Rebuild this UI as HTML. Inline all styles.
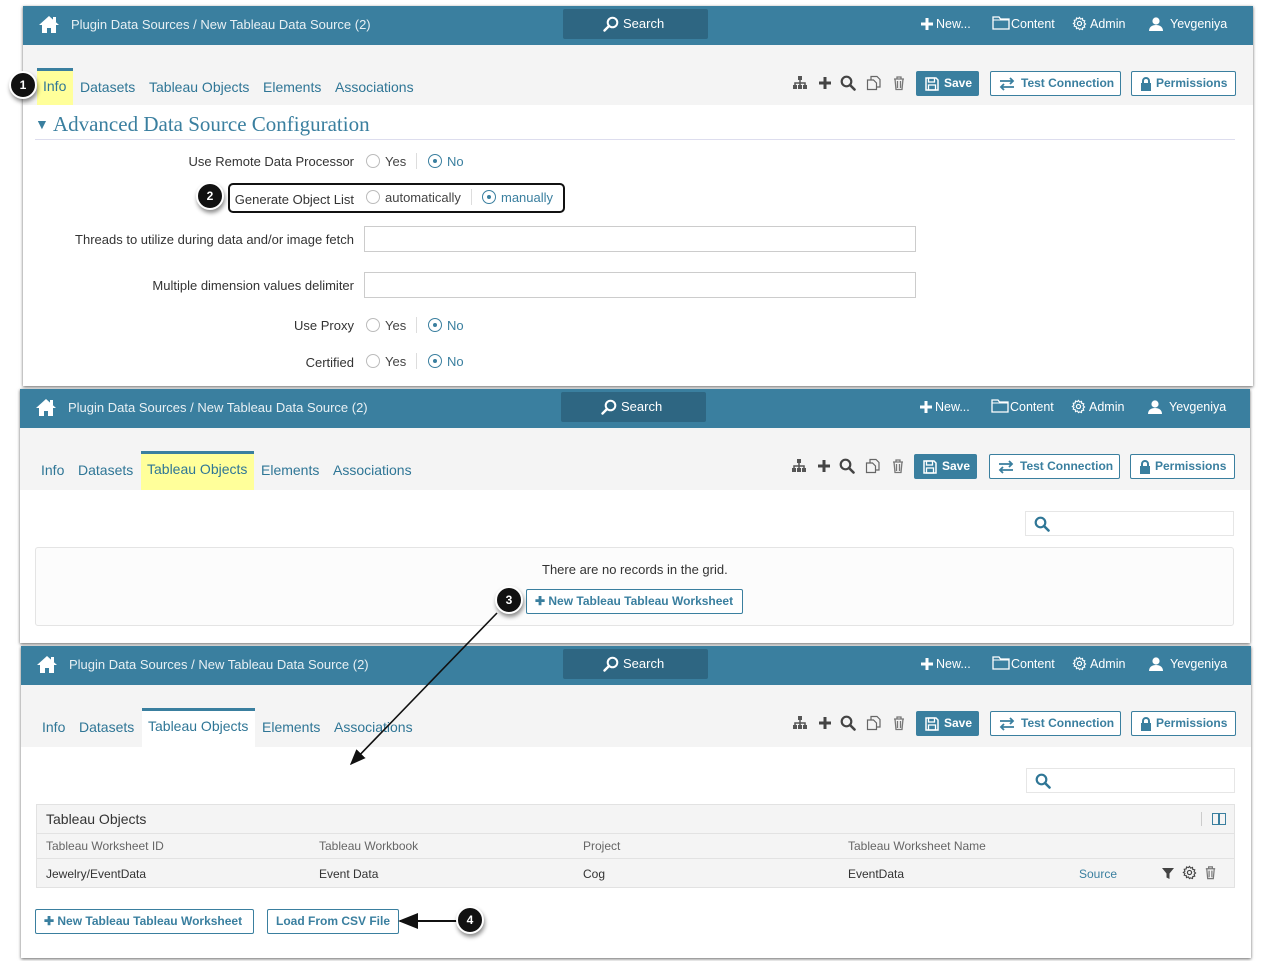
<!DOCTYPE html>
<html><head><meta charset="utf-8"><style>
*{box-sizing:border-box;margin:0;padding:0}
body{width:1264px;height:961px;background:#fff;font-family:"Liberation Sans",sans-serif;position:relative;overflow:hidden;font-size:13px;color:#333}
.a{position:absolute}
.panel{position:absolute;background:#fff;width:1230px;box-shadow:0 1px 3px rgba(0,0,0,.6)}
.hdr{position:absolute;left:0;top:0;width:100%;height:39px;background:#3a7f9f;color:#fff}
.hdr .t{position:absolute;left:48px;top:11px;font-size:13px;color:#e8f0f4}
.srch{position:absolute;left:540px;top:3px;width:145px;height:30px;background:#2e6682;border-radius:2px;font-size:13px;color:#fff;line-height:30px;padding-left:60px}
.srch svg{position:absolute;left:40px;top:7px}
.hi{position:absolute;top:11px;font-size:12.5px;color:#fff}
.hi svg{position:absolute;left:-19px;top:-1px}
.bar{position:absolute;left:0;top:39px;width:100%;height:60px;background:#f4f4f4}
.tab{position:absolute;top:34px;font-size:14px;color:#2f7696}
.tb{position:absolute;top:26px;height:25px;border:1px solid #3a7f9f;border-radius:2px;font-size:12px;font-weight:bold;color:#3a7f9f;background:#fff;line-height:23px;padding-left:30px}
.tb svg{position:absolute;left:8px;top:5px}
.save{background:#3a7f9f;color:#fff}
.lbl{position:absolute;font-size:13px;color:#333;text-align:right;white-space:nowrap}
.rad{position:absolute;width:14px;height:14px;border:1px solid #bbb;border-radius:50%}
.rad.on{border-color:#3a7f9f}
.rad.on:after{content:"";position:absolute;left:4px;top:4px;width:4px;height:4px;border-radius:50%;background:#3a7f9f}
.rt{position:absolute;font-size:13px;color:#444}
.sep{position:absolute;width:1px;height:16px;background:#ddd}
.inp{position:absolute;border:1px solid #ccc;background:#fff}
.call{position:absolute;width:28px;height:28px;border-radius:50%;background:#111;color:#fff;font-size:12px;font-weight:bold;text-align:center;line-height:24px;box-shadow:1px 3px 4px rgba(0,0,0,.45);border:2px solid #fff}
.obtn{position:absolute;height:25px;border:1px solid #3a7f9f;border-radius:2px;background:#fff;color:#3a7f9f;font-size:12px;font-weight:bold;line-height:23px;padding:0 8px;white-space:nowrap}
.ic{position:absolute;top:30px}
</style></head><body>

<svg width="0" height="0" style="position:absolute">
 <defs>
  <symbol id="home" viewBox="0 0 22 20"><path d="M11 2L1 11h3v8h5v-5h4v5h5v-8h3z" fill="#fff"/><rect x="15" y="3" width="3" height="5" fill="#fff"/></symbol>
  <symbol id="mag" viewBox="0 0 16 16"><circle cx="9.5" cy="6.5" r="4.8" fill="none" stroke="currentColor" stroke-width="2"/><path d="M6 10L1.5 14.5" stroke="currentColor" stroke-width="2.4" stroke-linecap="round"/></symbol>
  <symbol id="magr" viewBox="0 0 16 16"><circle cx="6.5" cy="6.5" r="4.8" fill="none" stroke="currentColor" stroke-width="2.2"/><path d="M10 10L14.5 14.5" stroke="currentColor" stroke-width="2.6" stroke-linecap="round"/></symbol>
  <symbol id="tree" viewBox="0 0 16 16"><rect x="6" y="1" width="4" height="4" fill="#555"/><path d="M8 5v3M3 10V8h10v2M8 8v2" stroke="#555" stroke-width="1.5" fill="none"/><rect x="1" y="10" width="4" height="4" fill="#555"/><rect x="6" y="10" width="4" height="4" fill="#555"/><rect x="11" y="10" width="4" height="4" fill="#555"/></symbol>
  <symbol id="plus" viewBox="0 0 16 16"><path d="M8 2v12M2 8h12" stroke="#444" stroke-width="3"/></symbol>
  <symbol id="copy" viewBox="0 0 16 16"><path d="M5 5V1.5h6l3 3V12h-3M1.5 5h6l3 3v6.5h-9z" fill="none" stroke="#666" stroke-width="1.2"/></symbol>
  <symbol id="trash" viewBox="0 0 16 16"><path d="M3 4h10M6 4V2h4v2M4 4l1 10.5h6L12 4M6.5 6v7M9.5 6v7" fill="none" stroke="#777" stroke-width="1.3"/></symbol>
  <symbol id="disk" viewBox="0 0 14 14"><path d="M1 1h10l2 2v10H1z" fill="none" stroke="#fff" stroke-width="1.5"/><rect x="3.5" y="1" width="6" height="4" fill="none" stroke="#fff" stroke-width="1.3"/><rect x="3.5" y="8" width="7" height="5" fill="none" stroke="#fff" stroke-width="1.3"/></symbol>
  <symbol id="swap" viewBox="0 0 16 14"><path d="M1 4h13M11 1l3 3-3 3M15 10H2M5 7l-3 3 3 3" fill="none" stroke="#3a7f9f" stroke-width="1.8"/></symbol>
  <symbol id="lock" viewBox="0 0 12 14"><path d="M3 6V4a3 3 0 016 0v2" fill="none" stroke="#3a7f9f" stroke-width="2"/><rect x="1" y="6" width="10" height="8" fill="#3a7f9f"/></symbol>
  <symbol id="fold" viewBox="0 0 18 14"><path d="M1 1h6l1.5 2H17v10H1z" fill="none" stroke="#fff" stroke-width="1.3"/><path d="M1 4h16" stroke="#fff" stroke-width="1"/></symbol>
  <symbol id="gear" viewBox="0 0 16 16"><circle cx="8" cy="8" r="2.2" fill="none" stroke="currentColor" stroke-width="1.3"/><path d="M8 1.5l1.2 1.8 2-.7.3 2.1 2.1.4-.7 2 1.6 1.4-1.6 1.4.7 2-2.1.4-.3 2.1-2-.7L8 14.5l-1.2-1.8-2 .7-.3-2.1-2.1-.4.7-2L1.5 8l1.6-1.4-.7-2 2.1-.4.3-2.1 2 .7z" fill="none" stroke="currentColor" stroke-width="1.2"/></symbol>
  <symbol id="user" viewBox="0 0 16 16"><circle cx="8" cy="5" r="3.6" fill="#fff"/><path d="M1 15c0-4 3-6 7-6s7 2 7 6z" fill="#fff"/></symbol>
 </defs>
</svg>

<!-- PANEL 1 -->
<div class="panel" style="left:23px;top:6px;height:380px">
 <div class="hdr">
  <svg class="a" style="left:15px;top:8px" width="22" height="20"><use href="#home"/></svg>
  <div class="t">Plugin Data Sources / New Tableau Data Source (2)</div>
  <div class="srch"><svg width="16" height="16" style="color:#fff"><use href="#mag"/></svg>Search</div>
  <div class="hi" style="left:913px"><svg width="12" height="12" style="left:-15px;top:1px"><path d="M6 0v12M0 6h12" stroke="#fff" stroke-width="3"/></svg>New...</div>
  <div class="hi" style="left:988px"><svg width="18" height="14"><use href="#fold"/></svg>Content</div>
  <div class="hi" style="left:1067px"><svg width="15" height="15" style="color:#fff;left:-18px"><use href="#gear"/></svg>Admin</div>
  <div class="hi" style="left:1147px"><svg width="16" height="16" style="left:-22px"><use href="#user"/></svg>Yevgeniya</div>
 </div>
 <div class="bar">
  <div class="a" style="left:14px;top:23px;width:36px;height:37px;background:#ffff9a;border-top:3px solid #3a7f9f"></div>
  <div class="tab" style="left:20px;top:33px">Info</div>
  <div class="tab" style="left:57px">Datasets</div>
  <div class="tab" style="left:126px">Tableau Objects</div>
  <div class="tab" style="left:240px">Elements</div>
  <div class="tab" style="left:312px">Associations</div>
  <svg class="ic" style="left:769px" width="16" height="16"><use href="#tree"/></svg>
  <svg class="ic" style="left:794px" width="16" height="16"><use href="#plus"/></svg>
  <svg class="ic" style="left:817px;color:#444" width="16" height="16"><use href="#magr"/></svg>
  <svg class="ic" style="left:843px" width="16" height="16"><use href="#copy"/></svg>
  <svg class="ic" style="left:868px" width="16" height="16"><use href="#trash"/></svg>
  <div class="tb save" style="left:893px;width:63px;padding-left:27px"><svg width="14" height="14"><use href="#disk"/></svg>Save</div>
  <div class="tb" style="left:967px;width:131px"><svg width="16" height="14"><use href="#swap"/></svg>Test Connection</div>
  <div class="tb" style="left:1108px;width:105px;padding-left:24px"><svg width="12" height="14"><use href="#lock"/></svg>Permissions</div>
 </div>
 <div class="a" style="left:12px;top:106px;font-family:'Liberation Serif',serif;font-size:21px;color:#3a7f9f"><span style="font-size:14px;position:relative;top:-2px">▼</span> Advanced Data Source Configuration</div>
 <div class="a" style="left:12px;top:133px;width:1200px;height:1px;background:#dde"></div>
 <div class="lbl" style="top:148px;right:899px">Use Remote Data Processor</div>
 <div class="rad" style="left:343px;top:148px"></div><div class="rt" style="left:362px;top:148px">Yes</div><div class="sep" style="left:393px;top:147px"></div>
 <div class="rad on" style="left:405px;top:148px"></div><div class="rt" style="left:424px;top:148px;color:#3a7f9f">No</div>
 <div class="a" style="left:205px;top:177px;width:337px;height:30px;border:2px solid #111;border-radius:5px"></div>
 <div class="lbl" style="top:186px;right:899px">Generate Object List</div>
 <div class="rad" style="left:343px;top:184px"></div><div class="rt" style="left:362px;top:184px">automatically</div><div class="sep" style="left:448px;top:183px"></div>
 <div class="rad on" style="left:459px;top:184px"></div><div class="rt" style="left:478px;top:184px;color:#3a7f9f">manually</div>
 <div class="lbl" style="top:226px;right:899px">Threads to utilize during data and/or image fetch</div>
 <div class="inp" style="left:341px;top:220px;width:552px;height:26px"></div>
 <div class="lbl" style="top:272px;right:899px">Multiple dimension values delimiter</div>
 <div class="inp" style="left:341px;top:266px;width:552px;height:26px"></div>
 <div class="lbl" style="top:312px;right:899px">Use Proxy</div>
 <div class="rad" style="left:343px;top:312px"></div><div class="rt" style="left:362px;top:312px">Yes</div><div class="sep" style="left:393px;top:311px"></div>
 <div class="rad on" style="left:405px;top:312px"></div><div class="rt" style="left:424px;top:312px;color:#3a7f9f">No</div>
 <div class="lbl" style="top:349px;right:899px">Certified</div>
 <div class="rad" style="left:343px;top:348px"></div><div class="rt" style="left:362px;top:348px">Yes</div><div class="sep" style="left:393px;top:347px"></div>
 <div class="rad on" style="left:405px;top:348px"></div><div class="rt" style="left:424px;top:348px;color:#3a7f9f">No</div>
</div>

<!-- PANEL 2 -->
<div class="panel" style="left:20px;top:389px;height:254px">
 <div class="hdr">
  <svg class="a" style="left:15px;top:8px" width="22" height="20"><use href="#home"/></svg>
  <div class="t">Plugin Data Sources / New Tableau Data Source (2)</div>
  <div class="srch" style="left:541px"><svg width="16" height="16" style="color:#fff"><use href="#mag"/></svg>Search</div>
  <div class="hi" style="left:915px"><svg width="12" height="12" style="left:-15px;top:1px"><path d="M6 0v12M0 6h12" stroke="#fff" stroke-width="3"/></svg>New...</div>
  <div class="hi" style="left:990px"><svg width="18" height="14"><use href="#fold"/></svg>Content</div>
  <div class="hi" style="left:1069px"><svg width="15" height="15" style="color:#fff;left:-18px"><use href="#gear"/></svg>Admin</div>
  <div class="hi" style="left:1149px"><svg width="16" height="16" style="left:-22px"><use href="#user"/></svg>Yevgeniya</div>
 </div>
 <div class="bar" style="height:62px">
  <div class="a" style="left:121px;top:23px;width:113px;height:39px;background:#ffff9a;border-top:3px solid #3a7f9f"></div>
  <div class="tab" style="left:21px">Info</div>
  <div class="tab" style="left:58px">Datasets</div>
  <div class="tab" style="left:127px;top:33px">Tableau Objects</div>
  <div class="tab" style="left:241px">Elements</div>
  <div class="tab" style="left:313px">Associations</div>
  <svg class="ic" style="left:771px" width="16" height="16"><use href="#tree"/></svg>
  <svg class="ic" style="left:796px" width="16" height="16"><use href="#plus"/></svg>
  <svg class="ic" style="left:819px;color:#444" width="16" height="16"><use href="#magr"/></svg>
  <svg class="ic" style="left:845px" width="16" height="16"><use href="#copy"/></svg>
  <svg class="ic" style="left:870px" width="16" height="16"><use href="#trash"/></svg>
  <div class="tb save" style="left:894px;width:63px;padding-left:27px"><svg width="14" height="14"><use href="#disk"/></svg>Save</div>
  <div class="tb" style="left:969px;width:131px"><svg width="16" height="14"><use href="#swap"/></svg>Test Connection</div>
  <div class="tb" style="left:1110px;width:105px;padding-left:24px"><svg width="12" height="14"><use href="#lock"/></svg>Permissions</div>
 </div>
 <div class="inp" style="left:1005px;top:122px;width:209px;height:25px;border-color:#e6e6e6"><svg class="a" style="left:8px;top:4px;color:#2f7696" width="16" height="16"><use href="#magr"/></svg></div>
 <div class="a" style="left:15px;top:158px;width:1199px;height:79px;border:1px solid #e4e4e4;border-radius:3px;background:#fcfcfc"></div>
 <div class="a" style="left:522px;top:173px;font-size:13px;color:#333">There are no records in the grid.</div>
 <div class="obtn" style="left:506px;top:200px;width:217px">✚ New Tableau Tableau Worksheet</div>
</div>

<!-- PANEL 3 -->
<div class="panel" style="left:21px;top:646px;height:312px">
 <div class="hdr">
  <svg class="a" style="left:15px;top:8px" width="22" height="20"><use href="#home"/></svg>
  <div class="t">Plugin Data Sources / New Tableau Data Source (2)</div>
  <div class="srch" style="left:542px"><svg width="16" height="16" style="color:#fff"><use href="#mag"/></svg>Search</div>
  <div class="hi" style="left:915px"><svg width="12" height="12" style="left:-15px;top:1px"><path d="M6 0v12M0 6h12" stroke="#fff" stroke-width="3"/></svg>New...</div>
  <div class="hi" style="left:990px"><svg width="18" height="14"><use href="#fold"/></svg>Content</div>
  <div class="hi" style="left:1069px"><svg width="15" height="15" style="color:#fff;left:-18px"><use href="#gear"/></svg>Admin</div>
  <div class="hi" style="left:1149px"><svg width="16" height="16" style="left:-22px"><use href="#user"/></svg>Yevgeniya</div>
 </div>
 <div class="bar" style="height:62px">
  <div class="a" style="left:121px;top:23px;width:113px;height:39px;background:#fff;border-top:3px solid #3a7f9f"></div>
  <div class="tab" style="left:21px">Info</div>
  <div class="tab" style="left:58px">Datasets</div>
  <div class="tab" style="left:127px;top:33px">Tableau Objects</div>
  <div class="tab" style="left:241px">Elements</div>
  <div class="tab" style="left:313px">Associations</div>
  <svg class="ic" style="left:771px" width="16" height="16"><use href="#tree"/></svg>
  <svg class="ic" style="left:796px" width="16" height="16"><use href="#plus"/></svg>
  <svg class="ic" style="left:819px;color:#444" width="16" height="16"><use href="#magr"/></svg>
  <svg class="ic" style="left:845px" width="16" height="16"><use href="#copy"/></svg>
  <svg class="ic" style="left:870px" width="16" height="16"><use href="#trash"/></svg>
  <div class="tb save" style="left:895px;width:63px;padding-left:27px"><svg width="14" height="14"><use href="#disk"/></svg>Save</div>
  <div class="tb" style="left:969px;width:131px"><svg width="16" height="14"><use href="#swap"/></svg>Test Connection</div>
  <div class="tb" style="left:1110px;width:105px;padding-left:24px"><svg width="12" height="14"><use href="#lock"/></svg>Permissions</div>
 </div>
 <div class="inp" style="left:1005px;top:122px;width:209px;height:25px;border-color:#e6e6e6"><svg class="a" style="left:8px;top:4px;color:#2f7696" width="16" height="16"><use href="#magr"/></svg></div>
 <div class="a" style="left:15px;top:158px;width:1199px;height:84px;background:#f4f4f4;border:1px solid #e2e2e2"></div>
 <div class="a" style="left:25px;top:165px;font-size:14px;color:#333">Tableau Objects</div>
 <div class="a" style="left:1180px;top:166px;width:1px;height:14px;background:#ccc"></div>
 <div class="a" style="left:1191px;top:167px;width:14px;height:12px;border:1.5px solid #3a7f9f"></div><div class="a" style="left:1197px;top:167px;width:1.5px;height:12px;background:#3a7f9f"></div>
 <div class="a" style="left:16px;top:187px;width:1197px;height:1px;background:#e2e2e2"></div>
 <div class="a" style="left:16px;top:212px;width:1197px;height:1px;background:#e2e2e2"></div>
 <div class="a" style="left:25px;top:193px;font-size:12px;color:#666">Tableau Worksheet ID</div>
 <div class="a" style="left:298px;top:193px;font-size:12px;color:#666">Tableau Workbook</div>
 <div class="a" style="left:562px;top:193px;font-size:12px;color:#666">Project</div>
 <div class="a" style="left:827px;top:193px;font-size:12px;color:#666">Tableau Worksheet Name</div>
 <div class="a" style="left:25px;top:221px;font-size:12px;color:#333">Jewelry/EventData</div>
 <div class="a" style="left:298px;top:221px;font-size:12px;color:#333">Event Data</div>
 <div class="a" style="left:562px;top:221px;font-size:12px;color:#333">Cog</div>
 <div class="a" style="left:827px;top:221px;font-size:12px;color:#333">EventData</div>
 <div class="a" style="left:1058px;top:221px;font-size:12px;color:#3a7f9f">Source</div>
 <svg class="a" style="left:1140px;top:220px" width="14" height="14"><path d="M1 2h12L8.5 7.5V13l-3-1.5V7.5z" fill="#444"/></svg>
 <svg class="a" style="left:1161px;top:219px;color:#444" width="15" height="15"><use href="#gear"/></svg>
 <svg class="a" style="left:1182px;top:219px" width="15" height="15"><use href="#trash"/></svg>
 <div class="obtn" style="left:14px;top:263px;width:219px">✚ New Tableau Tableau Worksheet</div>
 <div class="obtn" style="left:246px;top:263px;width:132px">Load From CSV File</div>
</div>

<svg class="a" style="left:0;top:0" width="1264" height="961">
 <defs><marker id="ah" markerWidth="10" markerHeight="8" refX="9" refY="4" orient="auto"><path d="M0 0L10 4L0 8z" fill="#111"/></marker></defs>
 <line x1="497" y1="613" x2="351" y2="764" stroke="#111" stroke-width="1.6" marker-end="url(#ah)"/>
 <line x1="458" y1="921" x2="400" y2="921" stroke="#111" stroke-width="2" marker-end="url(#ah)"/>
</svg>
<div class="call" style="left:9px;top:71px">1</div>
<div class="call" style="left:196px;top:182px">2</div>
<div class="call" style="left:495px;top:586px">3</div>
<div class="call" style="left:456px;top:906px">4</div>
</body></html>
